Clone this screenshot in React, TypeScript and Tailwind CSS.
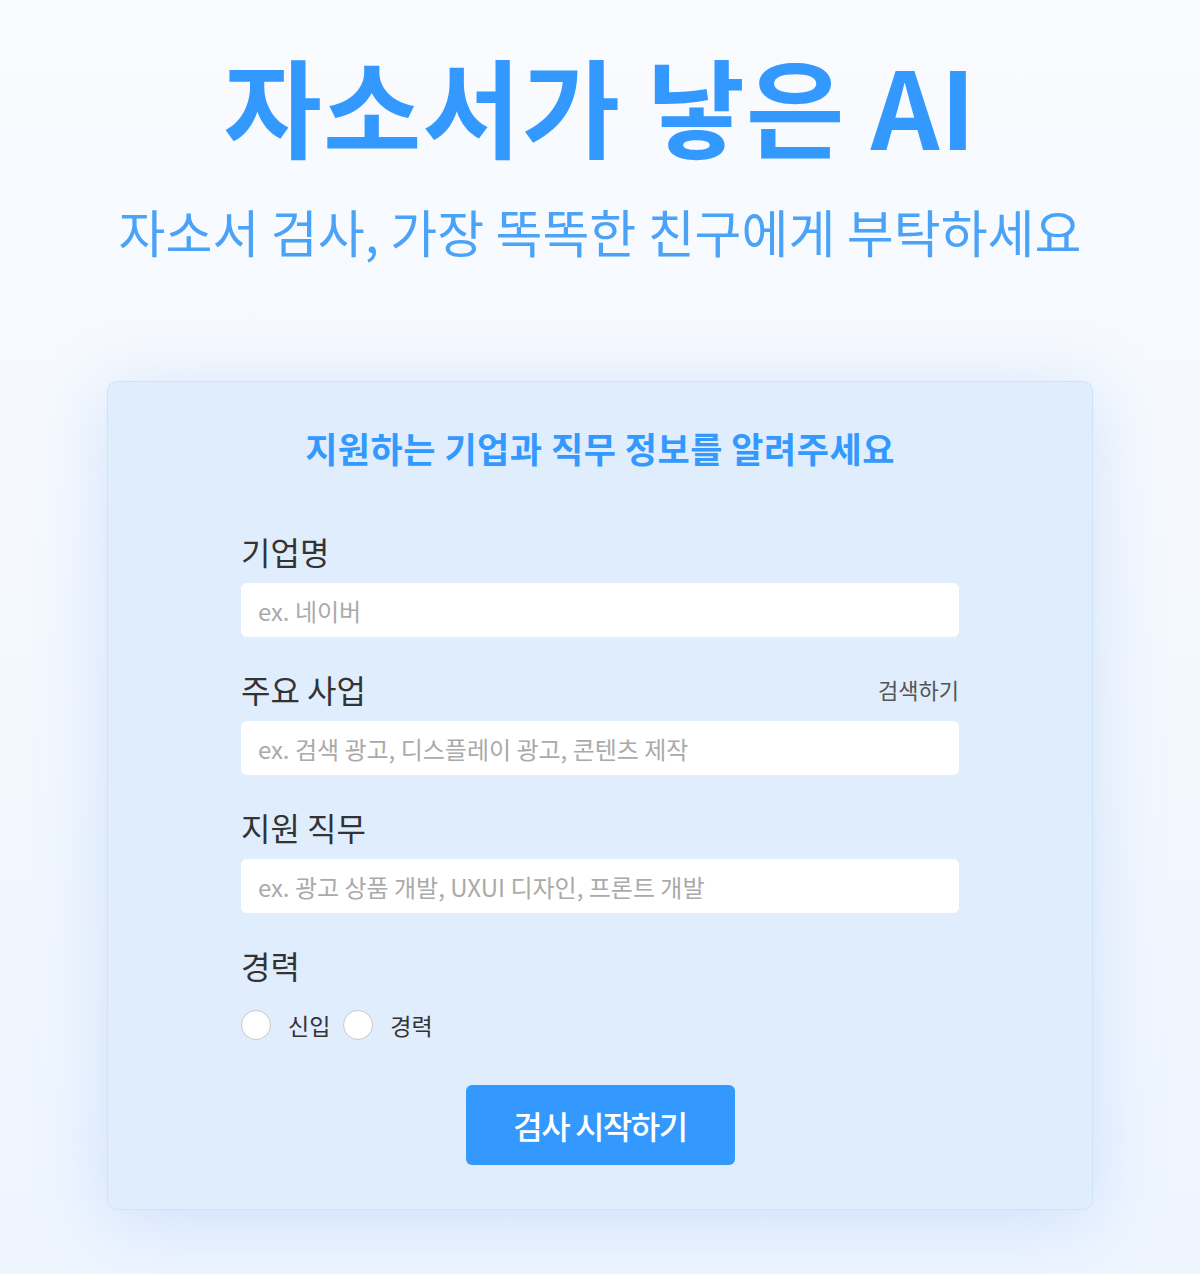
import React from "react";

const font = { fontFamily: '"Noto Sans CJK KR", "Noto Sans", sans-serif' };

function Label({ children }: { children: React.ReactNode }) {
  return <div className="text-[32px] leading-[32px] text-[#333333]">{children}</div>;
}

function Input({ placeholder }: { placeholder: string }) {
  return (
    <input
      className="block h-[54px] w-full rounded-[6px] bg-white px-[17px] text-[24px] text-[#333] placeholder:text-[#aaaaaa] outline-none"
      placeholder={placeholder}
      style={font}
    />
  );
}

function Radio({ label }: { label: string }) {
  return (
    <label className="flex items-center">
      <span className="h-[30px] w-[30px] rounded-full border-[1.5px] border-[#c8c8c8] bg-white" />
      <span className="ml-[17px] text-[23px] leading-[30px] text-[#333]">{label}</span>
    </label>
  );
}

export default function App() {
  return (
    <div
      className="min-h-[1274px] w-full bg-gradient-to-b from-[#f9fbfe] to-[#eef5ff] flex flex-col items-center"
      style={font}
    >
      <h1 className="mt-[50px] text-[107px] leading-[107px] font-bold text-[#3399ff] tracking-[1px]">자소서가 낳은 AI</h1>
      <p className="mt-[49px] text-[51px] leading-[51px] text-[#4ba3f7]">자소서 검사, 가장 똑똑한 친구에게 부탁하세요</p>

      <div className="mt-[124px] w-[986px] rounded-[10px] border border-[#cfe2f9] bg-[#e0edfd] shadow-[0_10px_70px_rgba(120,170,240,0.28)] px-[133px] pt-[48px] pb-[44px]">
        <h2 className="text-center text-[35px] leading-[35px] font-bold text-[#3399ff] tracking-[0.5px]">지원하는 기업과 직무 정보를 알려주세요</h2>

        <div className="mt-[70px] flex flex-col">
          <Label>기업명</Label>
          <div className="mt-[16px]"><Input placeholder="ex. 네이버" /></div>

          <div className="mt-[36px] flex items-center justify-between">
            <Label>주요 사업</Label>
            <span className="text-[22px] leading-[32px] text-[#555555]">검색하기</span>
          </div>
          <div className="mt-[16px]"><Input placeholder="ex. 검색 광고, 디스플레이 광고, 콘텐츠 제작" /></div>

          <div className="mt-[36px]"><Label>지원 직무</Label></div>
          <div className="mt-[16px]"><Input placeholder="ex. 광고 상품 개발, UXUI 디자인, 프론트 개발" /></div>

          <div className="mt-[36px]"><Label>경력</Label></div>
          <div className="mt-[29px] flex items-center gap-[13px]">
            <Radio label="신입" />
            <Radio label="경력" />
          </div>
        </div>

        <div className="mt-[45px] flex justify-center">
          <button className="block h-[80px] w-[269px] rounded-[6px] bg-[#3399ff] text-[32px] leading-[32px] font-medium text-white tracking-[-1.5px]" style={font}>
            검사 시작하기
          </button>
        </div>
      </div>
    </div>
  );
}
